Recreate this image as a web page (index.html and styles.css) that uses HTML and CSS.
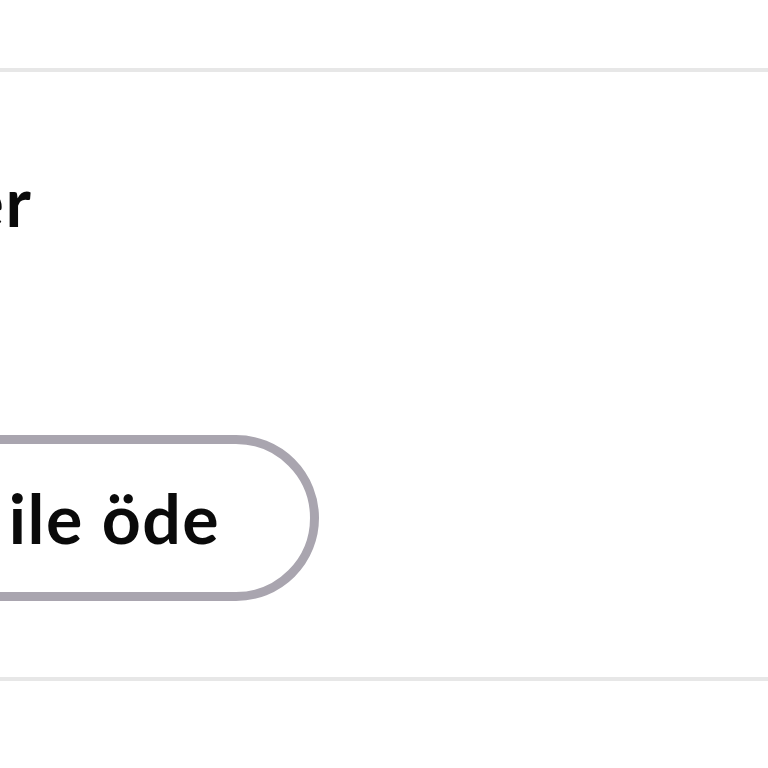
FILE: index.html
```html
<!DOCTYPE html>
<html lang="tr">
<head>
    <meta charset="UTF-8">
    <meta name="viewport" content="width=device-width, initial-scale=1.0">
    <title>Ödeme</title>
    <link rel="stylesheet" href="styles.css">
</head>
<body>
    <div class="top"></div>
    <section class="panel">
        <div class="inner">
            <h2 class="title">Öneriler</h2>
            <button class="pay-btn" type="button">Kart ile öde</button>
        </div>
    </section>
</body>
</html>
```

FILE: styles.css
```css
body {
    margin: 0;
    font-family: Lato, "Liberation Sans", sans-serif;
    background-color: #fff;
    color: #0a0a0a;
    overflow: hidden;
}

.top {
    height: 68px;
}

.panel {
    border-top: 4px solid #e7e7e7;
    border-bottom: 4px solid #e7e7e7;
    padding: 88px 0 76px 0;
}

.inner {
    display: flex;
    flex-direction: column;
    align-items: flex-start;
    gap: 193px;
    margin-left: -230px;
}

.title {
    margin: 0;
    font-size: 68px;
    font-weight: 700;
    line-height: 1.2;
    letter-spacing: 1.5px;
    white-space: nowrap;
}

.pay-btn {
    display: flex;
    align-items: center;
    height: 166px;
    padding: 0 90px 0 74px;
    border: 9px solid #a9a5af;
    border-radius: 999px;
    background-color: #fff;
    color: #0a0a0a;
    font-family: inherit;
    font-size: 68px;
    font-weight: 700;
    line-height: 1.2;
    letter-spacing: 1.5px;
    white-space: nowrap;
}
```
